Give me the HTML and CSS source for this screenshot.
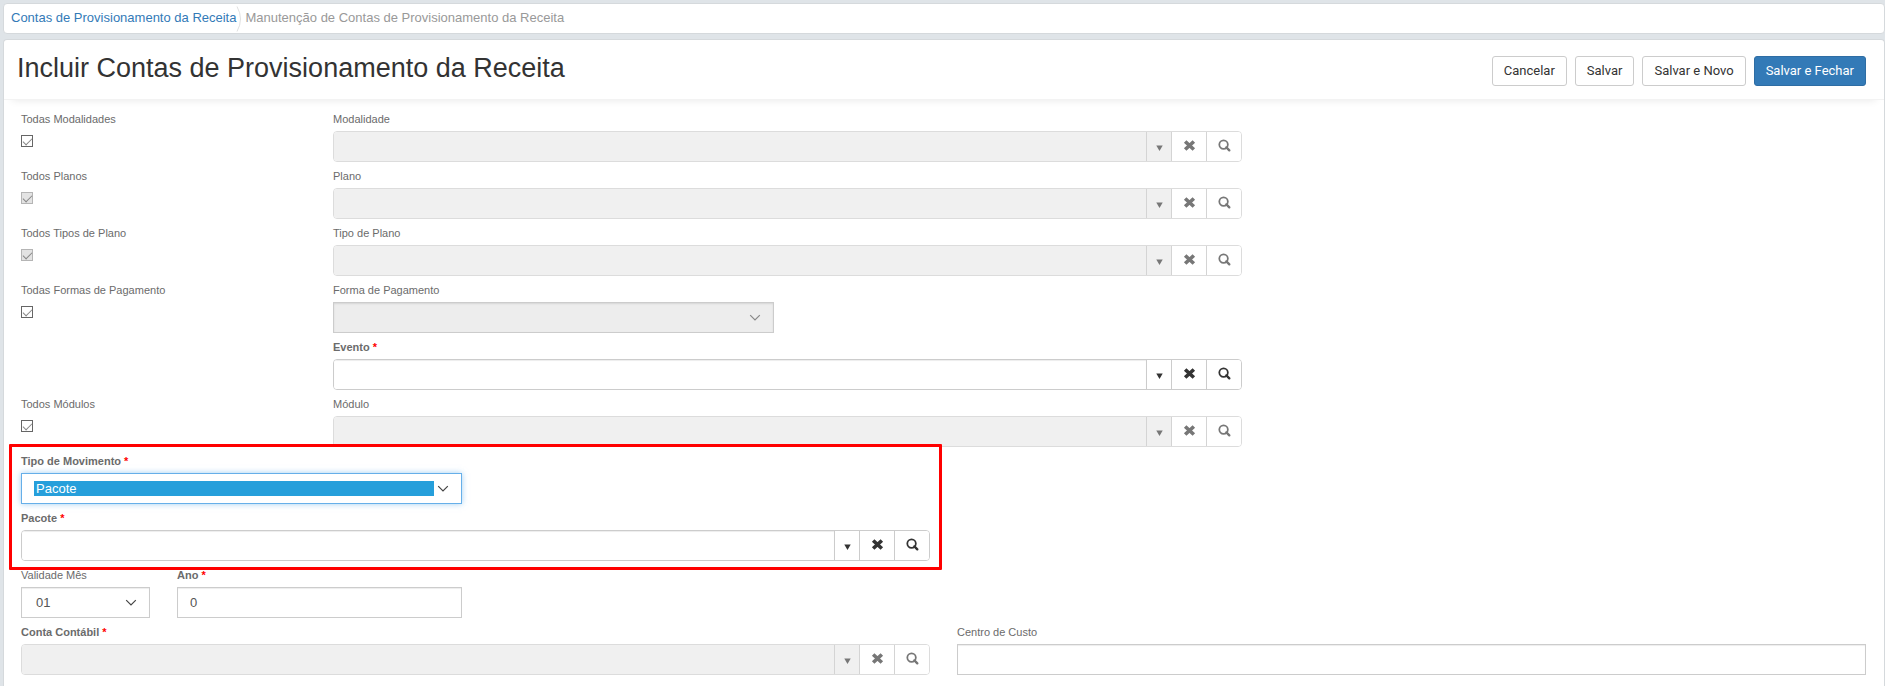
FILE: index.html
```html
<!DOCTYPE html>
<html lang="pt-BR">
<head>
    <meta charset="UTF-8">
    <meta name="viewport" content="width=device-width, initial-scale=1.0">
    <title>Contas de Provisionamento da Receita</title>
    <link rel="stylesheet" href="styles.css">
</head>
<body>
    <!-- shared icons -->
    <svg class="sprite" aria-hidden="true">
        <symbol id="i-down" viewBox="0 0 7 6"><path d="M0.3 0.5h6.4L3.5 6z" fill="currentColor"/></symbol>
        <symbol id="i-remove" viewBox="0 0 12 12"><path d="M2 2.3l8 7.4M10 2.3l-8 7.4" fill="none" stroke="currentColor" stroke-width="3.4"/></symbol>
        <symbol id="i-search" viewBox="0 0 14 14"><circle cx="6" cy="6" r="4.6" fill="none" stroke="currentColor" stroke-width="1.9"/><path d="M9 9l3.2 3.2" fill="none" stroke="currentColor" stroke-width="2.5" stroke-linecap="round"/></symbol>
        <symbol id="i-chevron" viewBox="0 0 12 8"><path d="M1.2 1.2L6 6l4.8-4.8" fill="none" stroke="currentColor" stroke-width="1.2"/></symbol>
    </svg>

    <nav class="breadcrumb" aria-label="Navegação">
        <a href="#">Contas de Provisionamento da Receita</a>
        <svg class="separator" viewBox="0 0 6 26" aria-hidden="true"><path d="M1 0.5Q8 13 1 25.5" fill="none" stroke="#e0e0e0"/></svg>
        <span>Manutenção de Contas de Provisionamento da Receita</span>
    </nav>

    <main class="panel">
        <header class="panel-header">
            <h1>Incluir Contas de Provisionamento da Receita</h1>
            <div class="actions">
                <button type="button" class="btn">Cancelar</button>
                <button type="button" class="btn">Salvar</button>
                <button type="button" class="btn">Salvar e Novo</button>
                <button type="submit" form="contaForm" class="btn btn-primary">Salvar e Fechar</button>
            </div>
        </header>

        <form id="contaForm" class="form">
            <div class="field col-2">
                <label for="todasModalidades">Todas Modalidades</label>
                <input type="checkbox" id="todasModalidades" checked>
            </div>
            <div class="field col-6">
                <label for="modalidade">Modalidade</label>
                <div class="lookup disabled">
                    <input type="text" id="modalidade" disabled>
                    <button type="button" class="trigger" aria-label="Abrir lista" disabled><svg><use href="#i-down"/></svg></button>
                    <button type="button" aria-label="Limpar" disabled><svg><use href="#i-remove"/></svg></button>
                    <button type="button" aria-label="Pesquisar" disabled><svg><use href="#i-search"/></svg></button>
                </div>
            </div>

            <div class="field col-2 new-row">
                <label for="todosPlanos">Todos Planos</label>
                <input type="checkbox" id="todosPlanos" checked disabled>
            </div>
            <div class="field col-6">
                <label for="plano">Plano</label>
                <div class="lookup disabled">
                    <input type="text" id="plano" disabled>
                    <button type="button" class="trigger" aria-label="Abrir lista" disabled><svg><use href="#i-down"/></svg></button>
                    <button type="button" aria-label="Limpar" disabled><svg><use href="#i-remove"/></svg></button>
                    <button type="button" aria-label="Pesquisar" disabled><svg><use href="#i-search"/></svg></button>
                </div>
            </div>

            <div class="field col-2 new-row">
                <label for="todosTipos">Todos Tipos de Plano</label>
                <input type="checkbox" id="todosTipos" checked disabled>
            </div>
            <div class="field col-6">
                <label for="tipoPlano">Tipo de Plano</label>
                <div class="lookup disabled">
                    <input type="text" id="tipoPlano" disabled>
                    <button type="button" class="trigger" aria-label="Abrir lista" disabled><svg><use href="#i-down"/></svg></button>
                    <button type="button" aria-label="Limpar" disabled><svg><use href="#i-remove"/></svg></button>
                    <button type="button" aria-label="Pesquisar" disabled><svg><use href="#i-search"/></svg></button>
                </div>
            </div>

            <div class="field col-2 new-row">
                <label for="todasFormas">Todas Formas de Pagamento</label>
                <input type="checkbox" id="todasFormas" checked>
            </div>
            <div class="field col-3">
                <label for="formaPagamento">Forma de Pagamento</label>
                <div class="select">
                    <select id="formaPagamento" disabled><option></option></select>
                    <svg><use href="#i-chevron"/></svg>
                </div>
            </div>

            <div class="field col-6 offset-2">
                <label for="evento" class="required">Evento</label>
                <div class="lookup">
                    <input type="text" id="evento" required>
                    <button type="button" class="trigger" aria-label="Abrir lista"><svg><use href="#i-down"/></svg></button>
                    <button type="button" aria-label="Limpar"><svg><use href="#i-remove"/></svg></button>
                    <button type="button" aria-label="Pesquisar"><svg><use href="#i-search"/></svg></button>
                </div>
            </div>

            <div class="field col-2 new-row">
                <label for="todosModulos">Todos Módulos</label>
                <input type="checkbox" id="todosModulos" checked>
            </div>
            <div class="field col-6">
                <label for="modulo">Módulo</label>
                <div class="lookup disabled">
                    <input type="text" id="modulo" disabled>
                    <button type="button" class="trigger" aria-label="Abrir lista" disabled><svg><use href="#i-down"/></svg></button>
                    <button type="button" aria-label="Limpar" disabled><svg><use href="#i-remove"/></svg></button>
                    <button type="button" aria-label="Pesquisar" disabled><svg><use href="#i-search"/></svg></button>
                </div>
            </div>

            <div class="highlight col-6 new-row">
                <div class="field col-3">
                    <label for="tipoMovimento" class="required">Tipo de Movimento</label>
                    <div class="select active">
                        <select id="tipoMovimento" required><option>Pacote</option></select>
                        <svg><use href="#i-chevron"/></svg>
                    </div>
                </div>
                <div class="field col-6">
                    <label for="pacote" class="required">Pacote</label>
                    <div class="lookup">
                        <input type="text" id="pacote" required>
                        <button type="button" class="trigger" aria-label="Abrir lista"><svg><use href="#i-down"/></svg></button>
                        <button type="button" aria-label="Limpar"><svg><use href="#i-remove"/></svg></button>
                        <button type="button" aria-label="Pesquisar"><svg><use href="#i-search"/></svg></button>
                    </div>
                </div>
            </div>

            <div class="field col-1 new-row">
                <label for="mes">Validade Mês</label>
                <div class="select">
                    <select id="mes"><option>01</option></select>
                    <svg><use href="#i-chevron"/></svg>
                </div>
            </div>
            <div class="field col-2">
                <label for="ano" class="required">Ano</label>
                <input type="text" id="ano" class="text" value="0" required>
            </div>

            <div class="field col-6 new-row">
                <label for="contaContabil" class="required">Conta Contábil</label>
                <div class="lookup disabled">
                    <input type="text" id="contaContabil" disabled>
                    <button type="button" class="trigger" aria-label="Abrir lista" disabled><svg><use href="#i-down"/></svg></button>
                    <button type="button" aria-label="Limpar" disabled><svg><use href="#i-remove"/></svg></button>
                    <button type="button" aria-label="Pesquisar" disabled><svg><use href="#i-search"/></svg></button>
                </div>
            </div>
            <div class="field col-6">
                <label for="centroCusto">Centro de Custo</label>
                <input type="text" id="centroCusto" class="text">
            </div>
        </form>
    </main>
</body>
</html>
```
FILE: styles.css
```css
* {
    box-sizing: border-box;
}
body {
    display: flex;
    flex-direction: column;
    gap: 5px;
    min-height: 100vh;
    margin: 0;
    padding: 3px 0 0 3px;
    font-family: "Liberation Sans", Arial, sans-serif;
    font-size: 13px;
    color: #333;
    background-color: #dfe4e8;
}
input, select, button {
    margin: 0;
    font-family: inherit;
    font-size: 13px;
    color: #555;
}
.sprite {
    display: none;
}

/* breadcrumb */
.breadcrumb {
    display: flex;
    align-items: center;
    height: 31px;
    padding: 0 7px 3px;
    border: 1px solid #d5d9dc;
    border-radius: 4px;
    background-color: #fff;
    color: #999;
}
.breadcrumb a {
    color: #337ab7;
    text-decoration: none;
}
.breadcrumb .separator {
    width: 6px;
    height: 26px;
    margin: 3px 3px 0 0;
}

/* panel */
.panel {
    flex: 1;
    border: 1px solid #d5d9dc;
    border-bottom: none;
    border-radius: 4px 4px 0 0;
    background-color: #fff;
}
.panel-header {
    display: flex;
    align-items: flex-end;
    justify-content: space-between;
    padding: 10px 18px 13px 13px;
    border-bottom: 1px solid #f3f3f3;
    box-shadow: 0 8px 8px -8px rgba(0, 0, 0, 0.1);
}
h1 {
    margin: 0;
    font-size: 27px;
    font-weight: normal;
    line-height: 36px;
}
.actions {
    display: flex;
    gap: 8px;
}
.btn {
    height: 30px;
    padding: 0 11px 2px;
    border: 1px solid #ccc;
    border-radius: 3px;
    background-color: #fff;
    font-family: Roboto, Arial, sans-serif;
    color: #333;
    cursor: pointer;
}
.btn-primary {
    border-color: #2e6da4;
    background-color: #337ab7;
    color: #fff;
}

/* form grid */
.form {
    display: grid;
    grid-template-columns: repeat(12, minmax(0, 1fr));
    column-gap: 27px;
    padding: 5px 18px 12px 17px;
}
.col-1 {
    grid-column-end: span 1;
}
.col-2 {
    grid-column-end: span 2;
}
.col-3 {
    grid-column-end: span 3;
}
.col-6 {
    grid-column-end: span 6;
}
.new-row {
    grid-column-start: 1;
}
.offset-2 {
    grid-column-start: 3;
}
.field {
    display: flex;
    flex-direction: column;
    min-width: 0;
}
.field label {
    padding-top: 2px;
    font-size: 11px;
    line-height: 24px;
    white-space: nowrap;
    color: #6b6b6b;
}
.field .required {
    font-weight: bold;
}
.required::after {
    content: " *";
    color: #f00;
}

/* controls */
.text {
    width: 100%;
    height: 31px;
    padding: 0 12px;
    border: 1px solid #ccc;
    box-shadow: inset 0 1px 1px rgba(0, 0, 0, 0.075);
}
input[type="checkbox"] {
    display: grid;
    place-items: center;
    appearance: none;
    width: 12px;
    height: 12px;
    margin-top: 4px;
    border: 1px solid #666;
    background-color: #fff;
}
input[type="checkbox"]:checked::before {
    content: "";
    width: 8px;
    height: 4px;
    border: solid #888;
    border-width: 0 0 1px 1px;
    transform: translateY(-1px) rotate(-45deg);
}
input[type="checkbox"]:disabled {
    border-color: #b5b5b5;
    background-color: #e3e3e3;
}
.select {
    display: grid;
}
.select select {
    grid-area: 1 / 1;
    appearance: none;
    width: 100%;
    height: 31px;
    padding: 7px 27px 7px 12px;
    border: 1px solid #ccc;
    border-radius: 0;
    background-color: #fff;
    box-shadow: inset 0 1px 1px rgba(0, 0, 0, 0.075);
    line-height: 15px;
    text-indent: 2px;
}
.select select:disabled {
    background-color: #ededed;
    box-shadow: inset 0 1px 2px rgba(0, 0, 0, 0.1);
    opacity: 1;
}
.select svg {
    grid-area: 1 / 1;
    place-self: center end;
    width: 12px;
    height: 8px;
    margin-right: 13px;
    color: #444;
    pointer-events: none;
}
.select select:disabled + svg {
    color: #888;
}
.select.active select {
    border-color: #66afe9;
    background: linear-gradient(#269fdb, #269fdb) content-box no-repeat #fff;
    box-shadow: 0 0 6px rgba(102, 175, 233, 0.6);
    color: #fff;
}
.lookup {
    display: flex;
    height: 31px;
    border: 1px solid #ccc;
    border-radius: 4px;
    overflow: hidden;
}
.lookup input {
    flex: 1;
    min-width: 0;
    padding: 0 12px;
    border: none;
    background-color: #fff;
    box-shadow: inset 0 1px 1px rgba(0, 0, 0, 0.075);
}
.lookup button {
    display: flex;
    align-items: center;
    justify-content: center;
    width: 35px;
    padding: 0 0 2px;
    border: none;
    border-left: 1px solid #ccc;
    background-color: #fff;
    color: #333;
}
.lookup button svg {
    width: 13px;
    height: 13px;
}
.lookup .trigger {
    width: 25px;
    padding: 2px 0 0;
}
.lookup .trigger svg {
    width: 7px;
    height: 6px;
}
.lookup.disabled {
    border-color: #dcdcdc;
}
.lookup.disabled input,
.lookup.disabled .trigger {
    background-color: #f0f0f0;
    box-shadow: none;
}
.lookup.disabled button {
    border-color: #d4d4d4;
    color: #777;
}

/* red frame around the highlighted fields */
.highlight {
    position: relative;
    display: grid;
    grid-template-columns: repeat(6, minmax(0, 1fr));
    column-gap: 27px;
}
.highlight::after {
    content: "";
    position: absolute;
    inset: -3px -12px -9px;
    z-index: 1;
    border: 3px solid #f00;
    border-radius: 1px;
    pointer-events: none;
}
```
